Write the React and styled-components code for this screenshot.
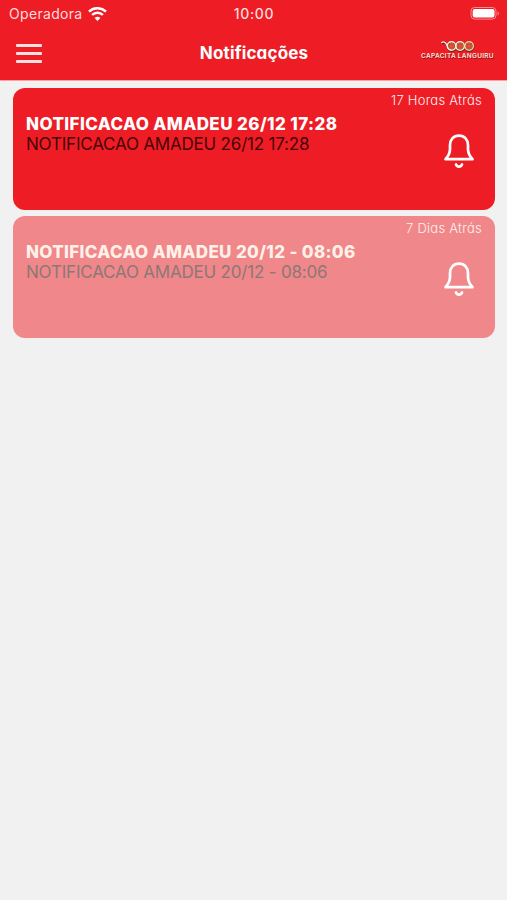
import React from 'react';
import styled, { createGlobalStyle } from 'styled-components';

const GlobalStyle = createGlobalStyle`
  * { box-sizing: border-box; }
  body {
    margin: 0;
    background: #f1f1f1;
    font-family: Inter, 'Liberation Sans', sans-serif;
  }
`;

const Screen = styled.div`
  min-height: 900px;
  background: #f1f1f1;
`;

const TopArea = styled.div`
  height: 80px;
  background: #ee1c25;
  color: #fff;
  box-shadow: 0 1px 0 #f5a3a7;
`;

const StatusBar = styled.div`
  display: grid;
  grid-template-columns: 1fr auto 1fr;
  align-items: center;
  height: 28px;
  padding: 0 7px 0 9px;
  color: #ffdcdc;
`;

const Carrier = styled.div`
  display: flex;
  align-items: center;
  gap: 5px;
  font-size: 14px;
  line-height: 20px;
  letter-spacing: 0.32px;
`;

const Clock = styled.div`
  margin-right: 1px;
  font-size: 14px;
  font-weight: 500;
  line-height: 20px;
  letter-spacing: 0.65px;
`;

const BatterySlot = styled.div`
  display: flex;
  justify-content: flex-end;
`;

const NavBar = styled.div`
  display: grid;
  grid-template-columns: 1fr auto 1fr;
  align-items: center;
  height: 52px;
  padding: 0 13px 0 16px;
`;

const MenuButton = styled.button`
  display: flex;
  flex-direction: column;
  gap: 5px;
  width: 26px;
  margin-top: -1px;
  padding: 0;
  border: 0;
  background: none;
`;

const MenuLine = styled.span`
  height: 3px;
  border-radius: 1px;
  background: #ffe0e0;
`;

const PageTitle = styled.h1`
  margin: -3px 2px 0 0;
  font-feature-settings: 'cv11';
  font-size: 17px;
  font-weight: 700;
  line-height: 24px;
  letter-spacing: 0.15px;
`;

const Brand = styled.div`
  display: flex;
  flex-direction: column;
  align-items: center;
  justify-self: end;
  width: 73px;
  margin-top: -8px;
`;

const BrandName = styled.span`
  font-size: 6.5px;
  font-weight: 600;
  line-height: 8px;
  letter-spacing: 0.28px;
  white-space: nowrap;
  color: #ffe6dc;
  text-shadow: 0.5px 0.7px 0.5px #84141a;
`;

const List = styled.div`
  display: flex;
  flex-direction: column;
  gap: 6px;
  padding: 8px 12px 0 13px;
`;

const Card = styled.div`
  display: flex;
  flex-direction: column;
  height: 122px;
  padding: 2px 13px 0;
  border-radius: 12px;
  color: #fff;
  background: ${props => (props.$read ? '#f0878a' : '#ee1c25')};
`;

const When = styled.div`
  align-self: flex-end;
  font-feature-settings: 'cv11';
  font-size: 13px;
  font-weight: 300;
  line-height: 20px;
  letter-spacing: 0.25px;
  color: ${props => (props.$read ? '#fff0ee' : '#fff0f0')};
`;

const CardBody = styled.div`
  display: flex;
  justify-content: space-between;
`;

const CardTitle = styled.div`
  margin-top: 4px;
  font-size: 17px;
  font-weight: 800;
  line-height: 20px;
  letter-spacing: ${props => props.$spacing};
  color: ${props => (props.$read ? '#fff1e8' : '#fff')};
`;

const CardText = styled.div`
  font-size: 17px;
  line-height: 21px;
  letter-spacing: -0.2px;
  color: ${props => (props.$read ? '#8c7875' : '#480508')};
`;

const BellSlot = styled.div`
  display: flex;
  padding: 23px 7px 0 0;
`;

const WifiIcon = () => (
  <svg width="19" height="15" viewBox="0 0 19 15" fill="none" stroke="#fff" strokeWidth="2.5">
    <path d="M1 4.6C5.8.1 13.2.1 18 4.6" />
    <path d="M4.1 7.9c3.1-2.9 7.7-2.9 10.8 0" />
    <path d="M9.5 13.9 6.6 10.9c1.7-1.5 4.1-1.5 5.8 0z" fill="#fff" stroke="none" />
  </svg>
);

const BatteryIcon = () => (
  <svg width="30" height="14" viewBox="0 0 30 14">
    <rect x="1" y="0.5" width="25" height="11.6" rx="3.6" fill="none" stroke="#f98b90" />
    <rect x="2.7" y="2" width="21.8" height="8.6" rx="2" fill="#fff" />
    <path d="M27.6 4.2c1.8.7 1.8 3.7 0 4.4z" fill="#f98b90" />
  </svg>
);

const BellIcon = () => (
  <svg width="32" height="36" viewBox="0 0 32 36" fill="none" stroke="#fff" strokeWidth="2.7" strokeLinecap="round" strokeLinejoin="round">
    <path d="M16 2.7C10.4 2.7 7 6.8 7 12v4.2c0 4-1.5 6.6-4.5 10h27c-3-3.4-4.5-6-4.5-10V12c0-5.2-3.4-9.3-9-9.3z" />
    <path d="M13 31.5c.6 1.5 1.6 2.2 3 2.2s2.4-.7 3-2.2" />
  </svg>
);

// three linked rings with a tail on the left
const BrandMark = () => (
  <svg width="36" height="12" viewBox="0 0 36 12" fill="none">
    <path d="M1.5 3.6C4 1 6 2.4 7 5.2s2.4 4.7 4.4 4.7" stroke="#751c17" strokeWidth="2.4" />
    <g stroke="#7d2619" strokeWidth="2.8">
      <circle cx="11.8" cy="6.7" r="3.8" />
      <circle cx="20.4" cy="6.7" r="3.8" />
      <circle cx="29.4" cy="6.7" r="3.8" />
    </g>
    <path d="M1.3 3C3.5.9 5.6 2 6.7 4.7s2.4 5 4.6 5" stroke="#ffe9df" strokeWidth="1.4" />
    <g strokeWidth="1.5">
      <circle cx="11.5" cy="6" r="4.2" stroke="#ffe9df" />
      <circle cx="20.1" cy="6" r="4.2" stroke="#ffe9df" />
      <circle cx="29.1" cy="6" r="4.2" stroke="#f3cfaa" />
      <circle cx="11.5" cy="6" r="2.5" stroke="#b7642f" />
      <circle cx="20.1" cy="6" r="2.5" stroke="#b7642f" />
      <circle cx="29.1" cy="6" r="2.5" stroke="#b7642f" />
    </g>
    <g fill="#f04a3c">
      <circle cx="11.5" cy="6" r="1.7" />
      <circle cx="20.1" cy="6" r="1.7" />
      <circle cx="29.1" cy="6" r="1.7" />
    </g>
  </svg>
);

const notifications = [
  {
    id: 1,
    title: 'NOTIFICACAO AMADEU 26/12 17:28',
    text: 'NOTIFICACAO AMADEU 26/12 17:28',
    when: '17 Horas Atrás',
    read: false
  },
  {
    id: 2,
    title: 'NOTIFICACAO AMADEU 20/12 - 08:06',
    text: 'NOTIFICACAO AMADEU 20/12 - 08:06',
    when: '7 Dias Atrás',
    read: true
  }
];

const Notification = ({ item }) => (
  <Card $read={item.read}>
    <When $read={item.read}>{item.when}</When>
    <CardBody>
      <div>
        <CardTitle $read={item.read} $spacing={item.read ? '0.34px' : '0.4px'}>{item.title}</CardTitle>
        <CardText $read={item.read}>{item.text}</CardText>
      </div>
      <BellSlot>
        <BellIcon />
      </BellSlot>
    </CardBody>
  </Card>
);

const App = () => (
  <>
    <GlobalStyle />
    <Screen>
      <TopArea>
        <StatusBar>
          <Carrier>Operadora <WifiIcon /></Carrier>
          <Clock>10:00</Clock>
          <BatterySlot><BatteryIcon /></BatterySlot>
        </StatusBar>
        <NavBar>
          <MenuButton aria-label="Menu">
            <MenuLine />
            <MenuLine />
            <MenuLine />
          </MenuButton>
          <PageTitle>Notificações</PageTitle>
          <Brand>
            <BrandMark />
            <BrandName>CAPACITA LANGUIRU</BrandName>
          </Brand>
        </NavBar>
      </TopArea>
      <List>
        {notifications.map(item => <Notification key={item.id} item={item} />)}
      </List>
    </Screen>
  </>
);

export default App;
